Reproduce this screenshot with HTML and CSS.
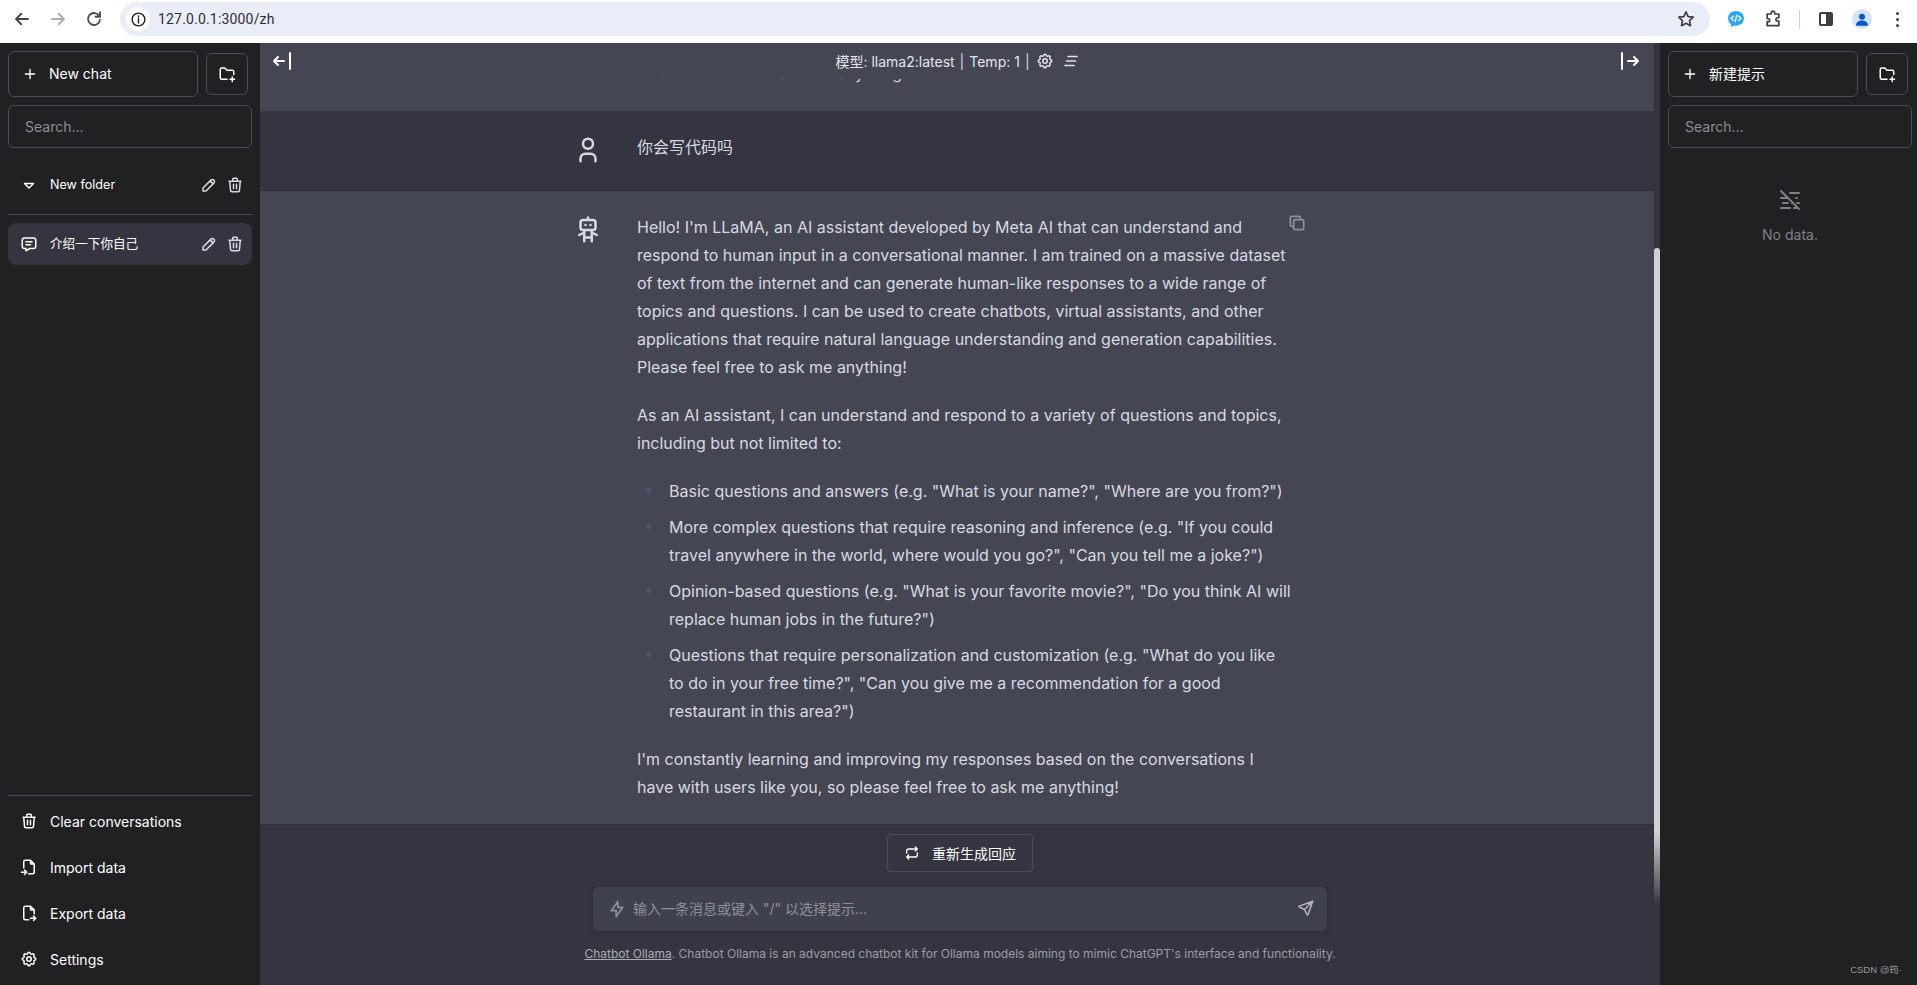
FILE: index.html
```html
<!DOCTYPE html>
<html lang="zh">
<head>
<meta charset="utf-8">
<title>Chatbot Ollama</title>
<link rel="stylesheet" href="styles.css">
</head>
<body>
<svg class="defs" aria-hidden="true">
  <symbol id="i-plus" viewBox="0 0 24 24"><path d="M12 5v14M5 12h14"/></symbol>
  <symbol id="i-folder-plus" viewBox="0 0 24 24"><path d="M12 19h-7a2 2 0 0 1 -2 -2v-11a2 2 0 0 1 2 -2h4l3 3h7a2 2 0 0 1 2 2v3.5M16 19h6M19 16v6"/></symbol>
  <symbol id="i-caret" viewBox="0 0 24 24"><path d="M6 10l6 6l6 -6h-12"/></symbol>
  <symbol id="i-pencil" viewBox="0 0 24 24"><path d="M4 20h4l10.5 -10.5a2.828 2.828 0 1 0 -4 -4l-10.5 10.5v4M13.5 6.5l4 4"/></symbol>
  <symbol id="i-trash" viewBox="0 0 24 24"><path d="M4 7l16 0M10 11l0 6M14 11l0 6M5 7l1 12a2 2 0 0 0 2 2h8a2 2 0 0 0 2 -2l1 -12M9 7v-3a1 1 0 0 1 1 -1h4a1 1 0 0 1 1 1v3"/></symbol>
  <symbol id="i-message" viewBox="0 0 24 24"><path d="M8 9h8M8 13h6M18 4a3 3 0 0 1 3 3v8a3 3 0 0 1 -3 3h-5l-5 3v-3h-2a3 3 0 0 1 -3 -3v-8a3 3 0 0 1 3 -3h12z"/></symbol>
  <symbol id="i-import" viewBox="0 0 24 24"><path d="M14 3v4a1 1 0 0 0 1 1h4M5 13v-8a2 2 0 0 1 2 -2h7l5 5v11a2 2 0 0 1 -2 2h-5.500m-9.500 -2h7m-3 -3l3 3l-3 3"/></symbol>
  <symbol id="i-export" viewBox="0 0 24 24"><path d="M14 3v4a1 1 0 0 0 1 1h4M11.500 21h-4.500a2 2 0 0 1 -2 -2v-14a2 2 0 0 1 2 -2h7l5 5v5m-5 6h7m-3 -3l3 3l-3 3"/></symbol>
  <symbol id="i-settings" viewBox="0 0 24 24"><path d="M10.325 4.317c.426 -1.756 2.924 -1.756 3.35 0a1.724 1.724 0 0 0 2.573 1.066c1.543 -.94 3.31 .826 2.37 2.37a1.724 1.724 0 0 0 1.065 2.572c1.756 .426 1.756 2.924 0 3.35a1.724 1.724 0 0 0 -1.066 2.573c.94 1.543 -.826 3.31 -2.37 2.37a1.724 1.724 0 0 0 -2.572 1.065c-.426 1.756 -2.924 1.756 -3.35 0a1.724 1.724 0 0 0 -2.573 -1.066c-1.543 .94 -3.31 -.826 -2.37 -2.37a1.724 1.724 0 0 0 -1.065 -2.572c-1.756 -.426 -1.756 -2.924 0 -3.35a1.724 1.724 0 0 0 1.066 -2.573c-.94 -1.543 .826 -3.31 2.37 -2.37c1 .608 2.296 .07 2.572 -1.065z"/><circle cx="12" cy="12" r="3"/></symbol>
  <symbol id="i-bar-left" viewBox="0 0 24 24"><path d="M4 12h10M4 12l4 4M4 12l4 -4M20 4v16"/></symbol>
  <symbol id="i-bar-right" viewBox="0 0 24 24"><path d="M20 12h-10M20 12l-4 -4M20 12l-4 4M4 4v16"/></symbol>
  <symbol id="i-user" viewBox="0 0 24 24"><circle cx="12" cy="7" r="4"/><path d="M6 21v-2a4 4 0 0 1 4 -4h4a4 4 0 0 1 4 4v2"/></symbol>
  <symbol id="i-robot" viewBox="0 0 24 24"><path d="M6 6a2 2 0 0 1 2 -2h8a2 2 0 0 1 2 2v4a2 2 0 0 1 -2 2h-8a2 2 0 0 1 -2 -2zM12 2v2M9 12v9M15 12v9M5 16l4 -2M15 14l4 2M9 18h6M10 8v.01M14 8v.01"/></symbol>
  <symbol id="i-copy" viewBox="0 0 24 24"><path d="M8 10a2 2 0 0 1 2 -2h8a2 2 0 0 1 2 2v8a2 2 0 0 1 -2 2h-8a2 2 0 0 1 -2 -2zM16 8v-2a2 2 0 0 0 -2 -2h-8a2 2 0 0 0 -2 2v8a2 2 0 0 0 2 2h2"/></symbol>
  <symbol id="i-repeat" viewBox="0 0 24 24"><path d="M4 12v-3a3 3 0 0 1 3 -3h13m-3 -3l3 3l-3 3M20 12v3a3 3 0 0 1 -3 3h-13m3 3l-3 -3l3 -3"/></symbol>
  <symbol id="i-bolt" viewBox="0 0 24 24"><path d="M13 3v7h6l-8 11v-7h-6l8 -11"/></symbol>
  <symbol id="i-send" viewBox="0 0 24 24"><path d="M10 14l11 -11M21 3l-6.500 18a.55 .55 0 0 1 -1 0l-3.500 -7l-7 -3.500a.55 .55 0 0 1 0 -1l18 -6.500"/></symbol>
  <symbol id="i-mist-off" viewBox="0 0 24 24"><path d="M12 5h9M3 10h7M18 10h1M5 15h5M14 15h1m4 0h2M3 20h9m4 0h3M3 3l18 18"/></symbol>
  <symbol id="i-clear" viewBox="0 0 24 24"><path d="M8 6h12M6 12h12M4 18h12"/></symbol>
</svg>

<header class="chrome">
  <svg class="nav" viewBox="0 0 24 24"><path d="M20 12H5M11 5l-7 7 7 7"/></svg>
  <svg class="nav nav-off" viewBox="0 0 24 24"><path d="M4 12h15M13 5l7 7-7 7"/></svg>
  <svg class="nav" viewBox="0 0 24 24"><path d="M19 8a8 8 0 1 0 1 5M20 3v6h-6"/></svg>
  <div class="omnibox">
    <span class="site-info"><svg viewBox="0 0 24 24"><circle cx="12" cy="12" r="9"/><path d="M12 11v6M12 7v1.500"/></svg></span>
    <span class="url">127.0.0.1:3000/zh</span>
    <svg class="star" viewBox="0 0 24 24"><path d="M12 3.500l2.600 5.600 6.100.7-4.500 4.200 1.200 6-5.400-3-5.400 3 1.200-6-4.500-4.200 6.100-.7z"/></svg>
  </div>
  <div class="ext-group">
    <svg class="ext" viewBox="0 0 24 24"><path class="ext-bubble" d="M12 2.500c5.500 0 9.500 3.800 9.500 8.700 0 5-4 8.800-9.500 8.800-.9 0-1.700-.1-2.500-.3L6 22v-3.600C3.800 16.700 2.500 14.200 2.500 11.200 2.500 6.300 6.500 2.500 12 2.500z"/><path class="ext-code" d="M9 8.500l-3 2.700 3 2.700M15 8.500l3 2.700-3 2.700M13 7.500l-2 7.500"/></svg>
    <svg class="ext ext-line" viewBox="0 0 24 24"><path d="M10 4.500a2 2 0 0 1 4 0V6h5v4.500h-1.500a2 2 0 0 0 0 4H19V20H5v-4.500h1a2 2 0 0 0 0-4H5V6h5z"/></svg>
    <span class="ext-sep"></span>
    <span class="side-toggle"></span>
    <span class="avatar"><svg viewBox="0 0 24 24"><circle cx="12" cy="9" r="4"/><path d="M4 21c0-5 4-7 8-7s8 2 8 7z"/></svg></span>
    <span class="dots"><i></i><i></i><i></i></span>
  </div>
</header>

<div class="app">
  <aside class="sidebar">
    <div class="top-row">
      <button class="new-btn"><svg class="ic16"><use href="#i-plus"/></svg><span>New chat</span></button>
      <button class="folder-btn"><svg class="ic18"><use href="#i-folder-plus"/></svg></button>
    </div>
    <div class="search">Search...</div>
    <div class="list">
      <div class="folder-row">
        <svg class="ic18"><use href="#i-caret"/></svg>
        <span class="row-label">New folder</span>
        <svg class="ic18 row-act"><use href="#i-pencil"/></svg>
        <svg class="ic18 row-act"><use href="#i-trash"/></svg>
      </div>
      <div class="divider"></div>
      <div class="chat-row">
        <svg class="ic18"><use href="#i-message"/></svg>
        <span class="row-label">介绍一下你自己</span>
        <svg class="ic18 row-act"><use href="#i-pencil"/></svg>
        <svg class="ic18 row-act"><use href="#i-trash"/></svg>
      </div>
    </div>
    <div class="side-foot">
      <div class="foot-item"><svg class="ic18"><use href="#i-trash"/></svg><span>Clear conversations</span></div>
      <div class="foot-item"><svg class="ic18"><use href="#i-import"/></svg><span>Import data</span></div>
      <div class="foot-item"><svg class="ic18"><use href="#i-export"/></svg><span>Export data</span></div>
      <div class="foot-item"><svg class="ic18"><use href="#i-settings"/></svg><span>Settings</span></div>
    </div>
  </aside>

  <main class="main">
    <div class="scrollbar"></div>
    <div class="chat-header">
      <svg class="ic24 toggle"><use href="#i-bar-left"/></svg>
      <div class="model-info">
        <span>模型: llama2:latest</span><span class="pipe">|</span><span>Temp: 1</span><span class="pipe">|</span>
        <svg class="ic18 hdr-ic"><use href="#i-settings"/></svg>
        <svg class="ic18 hdr-ic"><use href="#i-clear"/></svg>
      </div>
      <svg class="ic24 toggle"><use href="#i-bar-right"/></svg>
    </div>
    <div class="clip-line"><div class="clip-text">Please feel free to ask me anything!</div></div>
    <section class="msg msg-user">
      <div class="msg-inner">
        <svg class="ic30"><use href="#i-user"/></svg>
        <div class="msg-body">你会写代码吗</div>
      </div>
    </section>
    <section class="msg msg-bot">
      <div class="msg-inner">
        <svg class="ic30"><use href="#i-robot"/></svg>
        <div class="msg-body prose">
          <svg class="ic20 copy"><use href="#i-copy"/></svg>
          <p>Hello! I'm LLaMA, an AI assistant developed by Meta AI that can understand and respond to human input in a conversational manner. I am trained on a massive dataset of text from the internet and can generate human-like responses to a wide range of topics and questions. I can be used to create chatbots, virtual assistants, and other applications that require natural language understanding and generation capabilities. Please feel free to ask me anything!</p>
          <p>As an AI assistant, I can understand and respond to a variety of questions and topics, including but not limited to:</p>
          <ul>
            <li>Basic questions and answers (e.g. "What is your name?", "Where are you from?")</li>
            <li>More complex questions that require reasoning and inference (e.g. "If you could travel anywhere in the world, where would you go?", "Can you tell me a joke?")</li>
            <li>Opinion-based questions (e.g. "What is your favorite movie?", "Do you think AI will replace human jobs in the future?")</li>
            <li>Questions that require personalization and customization (e.g. "What do you like to do in your free time?", "Can you give me a recommendation for a good restaurant in this area?")</li>
          </ul>
          <p>I'm constantly learning and improving my responses based on the conversations I have with users like you, so please feel free to ask me anything!</p>
        </div>
      </div>
    </section>
    <div class="composer">
      <button class="regen"><svg class="ic16"><use href="#i-repeat"/></svg><span>重新生成回应</span></button>
      <div class="input">
        <svg class="ic20 bolt"><use href="#i-bolt"/></svg>
        <span class="placeholder">输入一条消息或键入 "/" 以选择提示...</span>
        <svg class="ic18 send"><use href="#i-send"/></svg>
      </div>
      <div class="disclaimer"><u>Chatbot Ollama</u>. Chatbot Ollama is an advanced chatbot kit for Ollama models aiming to mimic ChatGPT's interface and functionality.</div>
    </div>
  </main>

  <aside class="sidebar sidebar-right">
    <div class="top-row">
      <button class="new-btn"><svg class="ic16"><use href="#i-plus"/></svg><span>新建提示</span></button>
      <button class="folder-btn"><svg class="ic18"><use href="#i-folder-plus"/></svg></button>
    </div>
    <div class="search">Search...</div>
    <div class="empty">
      <svg class="ic24"><use href="#i-mist-off"/></svg>
      <span>No data.</span>
    </div>
    <div class="watermark">CSDN @筠·</div>
  </aside>
</div>
</body>
</html>
```

FILE: styles.css
```css
* { box-sizing: border-box; }
html, body { margin: 0; height: 100%; overflow: hidden; }
body {
  font-family: Inter, "Noto Sans CJK SC", sans-serif;
  font-size: 14px;
  color: #fff;
  background: #202123;
  display: flex;
  flex-direction: column;
}
.defs { display: none; }
svg { fill: none; stroke: currentColor; stroke-width: 2; stroke-linecap: round; stroke-linejoin: round; flex: none; }
.ic16 { width: 16px; height: 16px; }
.ic18 { width: 18px; height: 18px; }
.ic20 { width: 20px; height: 20px; }
.ic24 { width: 24px; height: 24px; }
.ic30 { width: 30px; height: 30px; }

/* browser chrome */
.chrome {
  height: 43px;
  flex: none;
  background: #fff;
  display: flex;
  align-items: center;
  padding: 0 0 5px 13px;
  color: #45474b;
}
.nav { width: 18px; height: 18px; margin-right: 18px; stroke-width: 2.4; }
.nav-off { color: #a9acb2; }
.omnibox {
  margin-left: -1px;
  width: 1590px;
  height: 34px;
  border-radius: 17px;
  background: #e9edf7;
  display: flex;
  align-items: center;
  padding-left: 6px;
  padding-right: 14px;
}
.site-info {
  width: 24px; height: 24px; border-radius: 50%;
  background: #fff; display: flex; align-items: center; justify-content: center;
  margin-right: 8px;
}
.site-info svg { width: 17px; height: 17px; color: #1f1f1f; }
.url { font-family: Roboto, sans-serif; font-size: 14px; color: #2b2f36; letter-spacing: .18px; flex: 1; }
.star { width: 20px; height: 20px; color: #3c3f43; }
.ext-group { display: flex; align-items: center; flex: 1; padding-left: 16px; }
.ext { width: 20px; height: 20px; }
.ext-bubble { fill: #2aa7f5; stroke: none; }
.ext-code { stroke: #fff; stroke-width: 1.600; }
.ext-line { margin-left: 17px; color: #3c3f43; }
.ext-sep { width: 1px; height: 19px; background: #c6d5f2; margin: 0 19px 0 16px; }
.side-toggle { width: 14px; height: 14px; border: 2px solid #3c3f43; border-right-width: 7px; border-radius: 2px; }
.avatar { width: 20px; height: 20px; margin-left: 19px; border-radius: 50%; background: #d3e3fd; display: flex; align-items: center; justify-content: center; }
.avatar svg { width: 18px; height: 18px; fill: #0b57d0; stroke: none; }
.dots { display: flex; flex-direction: column; gap: 3px; margin-left: 24px; }
.dots i { width: 3px; height: 3px; border-radius: 50%; background: #3c3f43; display: block; }

/* layout */
.app { flex: 1; min-height: 0; display: flex; }
.sidebar {
  width: 260px;
  flex: none;
  background: #202123;
  padding: 8px 8px 3px;
  display: flex;
  flex-direction: column;
  position: relative;
}
.sidebar-right { width: 257px; }
.top-row { display: flex; align-items: center; gap: 8px; }
.new-btn {
  width: 190px; height: 46px;
  display: flex; align-items: center; gap: 11px;
  padding: 0 13px 2px;
  background: transparent;
  border: 1px solid #4d4e55;
  border-radius: 6px;
  color: #fff;
  font: inherit;
  text-align: left;
}
.new-btn svg { margin-top: 2px; }
.folder-btn {
  width: 42px; height: 42px;
  display: flex; align-items: center; justify-content: center;
  background: transparent;
  border: 1px solid #4d4e55;
  border-radius: 6px;
  color: #fff;
  padding: 0;
}
.search {
  margin-top: 8px;
  height: 43px;
  border: 1px solid #4d4e55;
  border-radius: 6px;
  padding: 0 16px;
  display: flex; align-items: center;
  color: #8b8d97;
  font-size: 14px;
}
.sidebar-right .search { width: 244px; }
.list { flex: 1; display: flex; flex-direction: column; }
.folder-row { height: 42px; margin-top: 16px; display: flex; align-items: center; padding-left: 12px; gap: 12px; font-size: 12.6px; }
.divider { height: 1px; background: #4d4e55; margin-top: 8px; }
.chat-row {
  height: 42px; margin-top: 8px;
  display: flex; align-items: center;
  padding-left: 12px; gap: 12px;
  background: #343541; border-radius: 8px;
  font-size: 12.6px;
}
.row-label { flex: 1; padding-bottom: 3px; }
.folder-row .row-label { padding-bottom: 1px; }
.row-act { color: #d9d9e3; margin-left: -4px; }
.row-act:last-child { margin-right: 8px; }
.side-foot { border-top: 1px solid #4d4e55; padding-top: 2px; }
.foot-item { height: 46px; display: flex; align-items: center; gap: 12px; padding-left: 12px; }

/* main */
.main {
  flex: 1; min-width: 0;
  background: #343541;
  position: relative;
  display: flex;
  flex-direction: column;
  padding-right: 6px;
}
.scrollbar {
  position: absolute; top: 205px; right: 0; width: 6px; height: 657px;
  border-radius: 4px 4px 0 0;
  background: linear-gradient(#d1d1d1 0, #d1d1d1 585px, transparent 657px);
}
.chat-header {
  height: 36px; flex: none;
  background: #444654;
  display: flex; align-items: center; justify-content: space-between;
  padding: 0 12px 0 10px;
}
.toggle { color: #fff; }
.model-info { display: flex; align-items: center; gap: 5px; color: #e3e4ea; font-size: 14px; margin-left: 3px; }
.pipe { color: #d9d9e3; }
.hdr-ic { margin-left: 1px; color: #e3e4ea; }
.hdr-ic:last-child { margin-left: 3px; }
.clip-line { height: 32px; flex: none; background: #444654; overflow: hidden; }
.clip-text { margin: -20px 0 0 377px; line-height: 28px; font-size: 16px; color: #d1d5db; }
.msg { flex: none; display: flex; justify-content: center; border-bottom: 1px solid #2d2e38; color: #d7dae0; }
.msg-user { height: 80px; background: #343541; }
.msg-bot { flex: 1; min-height: 0; overflow: hidden; background: #444654; }
.msg-inner { width: 768px; display: flex; padding-top: 22px; }
.ic30 { margin: 2px 34px 0 0; }
.msg-body { font-size: 16px; line-height: 28px; position: relative; width: 654px; }
.prose p { margin: 0 0 20px; }
.prose ul { margin: 0 0 20px; padding: 0 0 0 32px; list-style: none; }
.prose li { margin: 8px 0; position: relative; }
.prose li::before { content: ""; position: absolute; left: -23px; top: 11px; width: 5px; height: 5px; border-radius: 50%; background: #555766; }
.copy { position: absolute; top: 0; right: -16px; color: #8e919c; }

/* composer */
.composer { height: 160px; flex: none; margin-right: -6px; background: #343541; display: flex; flex-direction: column; align-items: center; }
.regen {
  margin-top: 9px;
  width: 146px; height: 38px;
  display: flex; align-items: center; justify-content: center; gap: 12px;
  background: #343541; border: 1px solid #4d4e55; border-radius: 4px;
  color: #fff; font: inherit; font-size: 14px;
}
.input {
  margin-top: 15px;
  width: 734px; height: 44px;
  display: flex; align-items: center;
  padding: 0 12px 0 14px;
  background: #40414f; border-radius: 6px;
  box-shadow: 0 0 6px rgba(0,0,0,.15);
  color: #8e919c;
}
.bolt { margin-right: 6px; }
.placeholder { flex: 1; font-size: 14px; padding-bottom: 2px; }
.send { color: #b4b6bf; margin-top: -2px; }
.disclaimer { margin-top: 15px; font-size: 12px; color: #9a9ca6; }
.disclaimer u { color: #a9abb4; }

/* right sidebar */
.empty { display: flex; flex-direction: column; align-items: center; margin-top: 40px; color: #7f8088; gap: 14px; width: 244px; }
.empty span { font-size: 14px; }
.watermark { position: absolute; right: 15px; bottom: 9px; font: 9.5px "Liberation Sans", "Noto Sans CJK SC", sans-serif; color: #9c9c9c; }
```
